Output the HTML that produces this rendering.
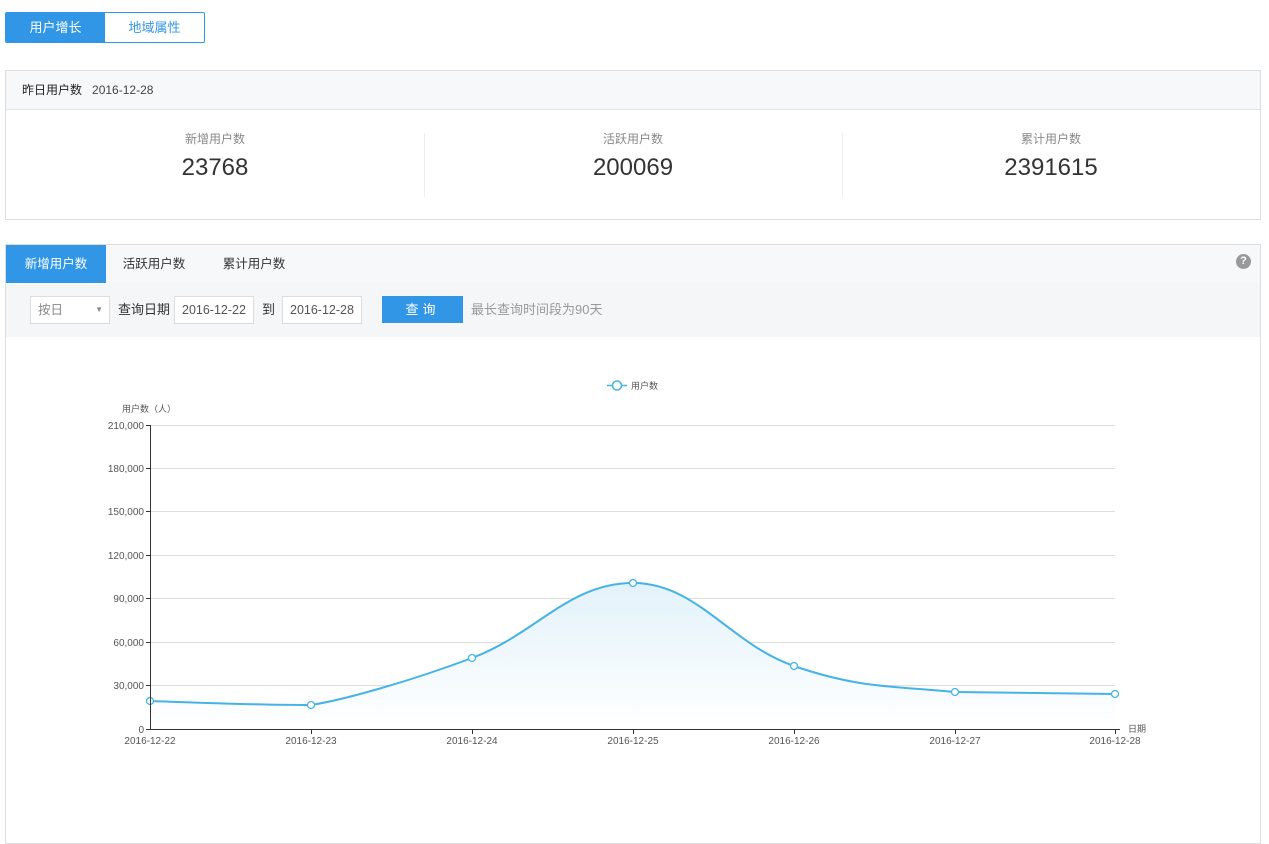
<!DOCTYPE html>
<html><head><meta charset="utf-8"><style>
*{box-sizing:border-box;margin:0;padding:0}
body{width:1269px;height:797px;overflow:hidden;background:#fff;font-family:"Liberation Sans","Noto Sans CJK SC",sans-serif;font-size:13px;color:#333;position:relative}
.abs{position:absolute}
.tog{left:5px;top:12px;width:200px;height:31px;border:1px solid #3296e6;border-radius:2px;display:flex}
.tog div{flex:1;text-align:center;line-height:29px;font-size:13px}
.p1{left:5px;top:70px;width:1256px;height:150px;border:1px solid #ddd}
.p1h{height:39px;background:#f7f8fa;border-bottom:1px solid #e5e5e5;line-height:38px;padding-left:16px;font-size:12px}
.stat{position:absolute;top:59px;width:418px;text-align:center}
.stat .l{color:#888;font-size:12px}
.stat .v{font-size:24px;color:#333;margin-top:7px}
.sep{position:absolute;top:62px;width:1px;height:64px;background:#eee}
.p2{left:5px;top:244px;width:1256px;height:600px;border:1px solid #ddd}
.tabs{height:38px;background:#f7f8fa;position:relative}
.tab{position:absolute;top:0;height:38px;line-height:38px;font-size:12.5px;text-align:center;width:100px}
.filt{height:54px;background:#f5f6f8;position:relative}
.inp{position:absolute;top:13px;height:28px;border:1px solid #ddd;background:#fff;line-height:26px;font-size:12.5px;color:#555;padding-left:7px}
</style></head><body>
<div class="abs tog"><div style="background:#3296e6;color:#fff">用户增长</div><div style="color:#3296e6">地域属性</div></div>

<div class="abs p1">
<div class="p1h"><span style="color:#222">昨日用户数</span>&nbsp;&nbsp;&nbsp;<span style="color:#444">2016-12-28</span></div>
<div class="stat" style="left:0"><div class="l">新增用户数</div><div class="v">23768</div></div>
<div class="sep" style="left:418px"></div>
<div class="stat" style="left:418px"><div class="l">活跃用户数</div><div class="v">200069</div></div>
<div class="sep" style="left:836px"></div>
<div class="stat" style="left:836px"><div class="l">累计用户数</div><div class="v">2391615</div></div>
</div>

<div class="abs p2">
<div class="tabs">
<div class="tab" style="left:0;background:#3296e6;color:#fff">新增用户数</div>
<div class="tab" style="left:98px">活跃用户数</div>
<div class="tab" style="left:198px">累计用户数</div>
<div style="position:absolute;right:9px;top:9px;width:15px;height:15px;border-radius:50%;background:#999;color:#fff;font-size:11px;font-weight:bold;text-align:center;line-height:15px">?</div>
</div>
<div class="filt">
<div class="inp" style="left:24px;width:80px;color:#888">按日<span style="position:absolute;right:6px;font-size:8px;color:#888">▼</span></div>
<div style="position:absolute;left:112px;top:13px;line-height:28px">查询日期</div>
<div class="inp" style="left:168px;width:80px">2016-12-22</div>
<div style="position:absolute;left:256px;top:13px;line-height:28px">到</div>
<div class="inp" style="left:276px;width:80px">2016-12-28</div>
<div style="position:absolute;left:376px;top:13px;width:81px;height:27px;background:#3296e6;color:#fff;text-align:center;line-height:27px;letter-spacing:4px">查询</div>
<div style="position:absolute;left:465px;top:13px;line-height:28px;color:#999">最长查询时间段为90天</div>
</div>
</div>

<svg class="abs" style="left:0;top:0" width="1269" height="797" font-family="Liberation Sans,Noto Sans CJK SC,sans-serif">
<defs><linearGradient id="g" x1="0" y1="0" x2="0" y2="1"><stop offset="0" stop-color="#e3f2fb"/><stop offset="1" stop-color="#fff"/></linearGradient></defs>
<g stroke="#ddd" stroke-width="1">
<line x1="150" y1="425.5" x2="1115" y2="425.5"/><line x1="150" y1="468.5" x2="1115" y2="468.5"/><line x1="150" y1="511.5" x2="1115" y2="511.5"/><line x1="150" y1="555.5" x2="1115" y2="555.5"/><line x1="150" y1="598.5" x2="1115" y2="598.5"/><line x1="150" y1="642.5" x2="1115" y2="642.5"/><line x1="150" y1="685.5" x2="1115" y2="685.5"/>
</g>
<path d="M150,701 C182,702 247,705 311,705 C343,700 408,682 472,658 C536,634 569,583 633,583 C697,583 730,644 794,666 C858,688 891,686 955,692 C1019,693 1083,694 1115,694 L1115,729 L150,729Z" fill="url(#g)"/>
<path d="M150,701 C182,702 247,705 311,705 C343,700 408,682 472,658 C536,634 569,583 633,583 C697,583 730,644 794,666 C858,688 891,686 955,692 C1019,693 1083,694 1115,694" fill="none" stroke="#45b3e6" stroke-width="2"/>
<g fill="#fff" stroke="#45b3e6" stroke-width="1.3">
<circle cx="150" cy="701" r="3.5"/><circle cx="311" cy="705" r="3.5"/><circle cx="472" cy="658" r="3.5"/><circle cx="633" cy="583" r="3.5"/><circle cx="794" cy="666" r="3.5"/><circle cx="955" cy="692" r="3.5"/><circle cx="1115" cy="694" r="3.5"/>
</g>
<g stroke="#333" stroke-width="1">
<line x1="150.5" y1="425" x2="150.5" y2="729"/><line x1="146" y1="729.5" x2="1120" y2="729.5"/>
<line x1="146" y1="425.5" x2="150" y2="425.5"/><line x1="146" y1="468.5" x2="150" y2="468.5"/><line x1="146" y1="511.5" x2="150" y2="511.5"/><line x1="146" y1="555.5" x2="150" y2="555.5"/><line x1="146" y1="598.5" x2="150" y2="598.5"/><line x1="146" y1="642.5" x2="150" y2="642.5"/><line x1="146" y1="685.5" x2="150" y2="685.5"/>
<line x1="311.5" y1="729" x2="311.5" y2="734"/><line x1="472.5" y1="729" x2="472.5" y2="734"/><line x1="633.5" y1="729" x2="633.5" y2="734"/><line x1="794.5" y1="729" x2="794.5" y2="734"/><line x1="955.5" y1="729" x2="955.5" y2="734"/><line x1="1115.5" y1="729" x2="1115.5" y2="734"/>
</g>
<g font-size="10" fill="#555" text-anchor="end">
<text x="144" y="429">210,000</text><text x="144" y="472">180,000</text><text x="144" y="515">150,000</text><text x="144" y="559">120,000</text><text x="144" y="602">90,000</text><text x="144" y="646">60,000</text><text x="144" y="689">30,000</text><text x="144" y="733">0</text>
</g>
<g font-size="10" fill="#555" text-anchor="middle">
<text x="150" y="744">2016-12-22</text><text x="311" y="744">2016-12-23</text><text x="472" y="744">2016-12-24</text><text x="633" y="744">2016-12-25</text><text x="794" y="744">2016-12-26</text><text x="955" y="744">2016-12-27</text><text x="1115" y="744">2016-12-28</text>
</g>
<text x="1128" y="732" font-size="9" fill="#555">日期</text>
<text x="122" y="412" font-size="9" fill="#555">用户数（人）</text>
<line x1="607" y1="385.5" x2="627" y2="385.5" stroke="#45b3e6" stroke-width="1.5"/>
<circle cx="617" cy="385.5" r="4.5" fill="#fff" stroke="#45b3e6" stroke-width="1.5"/>
<text x="631" y="389" font-size="9" fill="#555">用户数</text>
</svg>
</body></html>
